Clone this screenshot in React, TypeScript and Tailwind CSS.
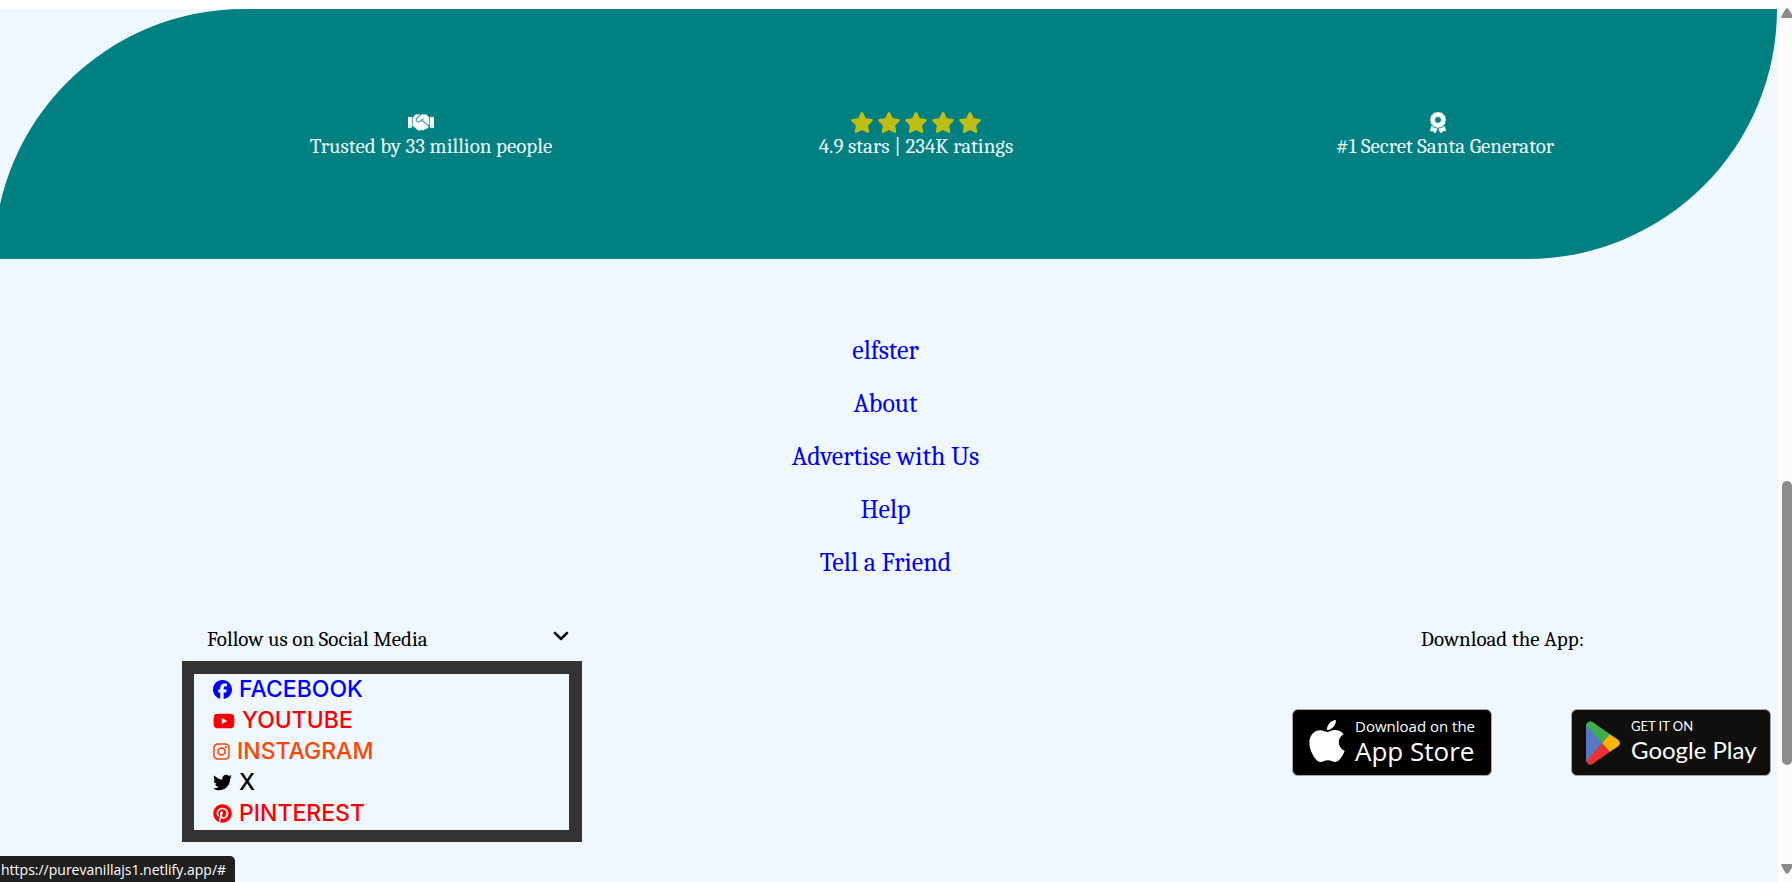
import type { ReactNode } from "react";
import { FaHandshake } from "react-icons/fa";
import {
  FaApple,
  FaAward,
  FaChevronDown,
  FaFacebook,
  FaInstagram,
  FaPinterest,
  FaStar,
  FaTwitter,
  FaYoutube,
} from "react-icons/fa6";

const links = ["elfster", "About", "Advertise with Us", "Help", "Tell a Friend"];

const socials = [
  { name: "FACEBOOK", icon: <FaFacebook className="size-[19px]" />, color: "text-[#0000ff]" },
  { name: "YOUTUBE", icon: <FaYoutube className="size-[22px]" />, color: "text-[#ff0000]" },
  { name: "INSTAGRAM", icon: <FaInstagram className="h-[19px] w-[17px]" />, color: "text-[#ff4500]" },
  { name: "X", icon: <FaTwitter className="size-[19px]" />, color: "text-black" },
  { name: "PINTEREST", icon: <FaPinterest className="size-[19px]" />, color: "text-[#ff0000]" },
];

function Stat({ icon, children }: { icon: ReactNode; children: ReactNode }) {
  return (
    <div className="flex flex-col items-center">
      <div className="flex h-6 items-center text-[21px]">{icon}</div>
      <p className="text-[21px] leading-6 font-medium">{children}</p>
    </div>
  );
}

function PlayLogo() {
  return (
    <svg viewBox="0 0 34 44" className="h-11 w-[34px] shrink-0" aria-hidden="true">
      <path d="M0.4 2.6 L17 22 L0.4 41.4 Q0 40.600 0 39 V5 Q0 3.400 0.400 2.600Z" fill="#5778c5" />
      <path d="M0.400 3.400 Q2.500 -1.200 6.500 1 L24.500 13.500 L16.500 22 L0.400 4Z" fill="#3dae49" />
      <path d="M0.400 40.600 Q2.500 45.200 6.500 43 L24.500 30.500 L16.500 22 L0.400 40Z" fill="#ec3132" />
      <path d="M24 13.200 L31.500 18.200 Q36.500 22 31.500 25.800 L24 30.800 L16 22Z" fill="#f6b60b" />
    </svg>
  );
}

function Scrollbar() {
  return (
    <div className="flex w-[14px] shrink-0 flex-col items-end bg-[#fcfcfc] pt-2 pb-2" aria-hidden="true">
      <svg viewBox="0 0 11 10" className="h-[10px] w-[11px]">
        <path d="M4.500 1 Q6 -0.500 7.500 1 L12 8 Q12.500 10 11 10 H1 Q-0.500 9.500 0.500 8Z" fill="#8b8b8b" />
      </svg>
      <div className="grow-[463]" />
      <div className="w-[10px] grow-[284] rounded-full bg-[#8b8b8b]" />
      <div className="grow-[99]" />
      <svg viewBox="0 0 11 10" className="h-[10px] w-[11px]">
        <path d="M4.500 9 Q6 10.500 7.500 9 L12 2 Q12.500 0 11 0 H1 Q-0.500 0.500 0.500 2Z" fill="#8b8b8b" />
      </svg>
    </div>
  );
}

export default function App() {
  return (
    <div className="flex min-h-screen bg-[#f0f8ff] font-[Cambria,Caladea,'Liberation_Serif',serif] text-black">
      <div className="min-w-0 flex-1 overflow-hidden">
        <div className="h-[9px] bg-white" />
        <section className="mr-px -ml-[6px] grid h-[250px] grid-cols-[502fr_468fr_590fr] rounded-tl-[250px] rounded-br-[250px] bg-[#008080] pt-[101px] pr-[37px] pl-[186px] text-[#f0f8ff]">
          <Stat
            icon={<FaHandshake className="mr-5 h-[21px] w-[26px] text-white" stroke="currentColor" strokeWidth="14" />}
          >
            Trusted by 33 million people
          </Stat>
          <Stat
            icon={
              <span className="flex gap-[3px] text-[#bebe14]">
                <FaStar className="w-6" />
                <FaStar className="w-6" />
                <FaStar className="w-6" />
                <FaStar className="w-6" />
                <FaStar className="w-6" />
              </span>
            }
          >
            4.9 stars | 234K ratings
          </Stat>
          <Stat icon={<FaAward className="mr-[14px] w-4 text-white" stroke="currentColor" strokeWidth="14" />}>
            #1 Secret Santa Generator
          </Stat>
        </section>

        <nav className="pt-[66px] pr-[7px]">
          <ul className="flex flex-col items-center text-[26px] leading-[53px] text-[#0000ee]">
            {links.map((l) => (
              <li key={l}>
                <a href="#">{l}</a>
              </li>
            ))}
          </ul>
        </nav>

        <footer className="flex justify-between pt-[33px] pr-[7px] pl-[182px]">
          <section className="w-[400px]">
            <button
              type="button"
              className="flex h-[38px] w-full items-start justify-between pr-[13px] pl-[25px] text-[21px] leading-8"
            >
              <span>Follow us on Social Media</span>
              <FaChevronDown className="mt-[3px] h-[18px] w-4" stroke="currentColor" strokeWidth="24" />
            </button>
            <ul className="border-[12px] border-t-[13px] border-r-[13px] border-[#333333] pb-px pl-[19px] font-['Inter',sans-serif] text-[23px] leading-[31px] font-medium">
              {socials.map((s) => (
                <li key={s.name} className={s.color}>
                  <a href="#" className="flex items-center gap-[7px]">
                    {s.icon}
                    {s.name}
                  </a>
                </li>
              ))}
            </ul>
          </section>

          <section className="w-[479px]">
            <h2 className="pr-[58px] text-center text-[21px] leading-8">Download the App:</h2>
            <div className="mt-[54px] flex justify-between">
              <a
                href="#"
                className="flex h-[67px] w-[200px] items-center rounded-[6px] border border-[#a6a6a6] bg-black pl-[16px] font-['Open_Sans',sans-serif] text-white"
              >
                <FaApple className="mb-1 h-12 w-9 shrink-0" />
                <span className="mb-[3px] ml-[10px] flex flex-col whitespace-nowrap">
                  <span className="text-[15px] leading-5">Download on the</span>
                  <span className="text-[26px] leading-[30px] font-medium">App Store</span>
                </span>
              </a>
              <a
                href="#"
                className="flex h-[67px] w-[200px] items-center rounded-[6px] border border-[#a6a6a6] bg-[#100f0d] pl-[14px] font-['Lato',sans-serif] text-white"
              >
                <PlayLogo />
                <span className="mb-[3px] ml-[11px] flex flex-col whitespace-nowrap">
                  <span className="text-[13px] leading-[18px]">GET IT ON</span>
                  <span className="text-[24px] leading-[30px]">Google Play</span>
                </span>
              </a>
            </div>
          </section>
        </footer>
      </div>
      <Scrollbar />
      <div className="fixed bottom-0 left-0 h-[26px] rounded-tr-[5px] bg-[#202020] pr-[9px] pl-px font-['Open_Sans',sans-serif] text-[14px] leading-[27px] text-white">
        https://purevanillajs1.netlify.app/#
      </div>
    </div>
  );
}
